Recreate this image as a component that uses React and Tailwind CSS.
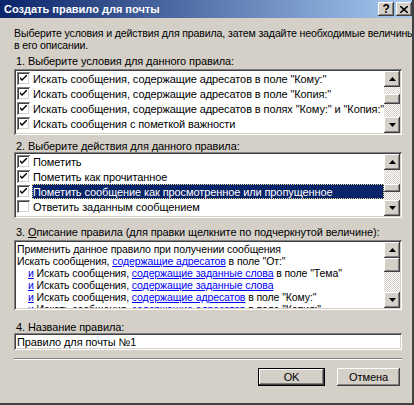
import React from 'react';

const raised = "shadow-[inset_-1px_-1px_#404040,inset_1px_1px_#ffffff,inset_-2px_-2px_#808080,inset_2px_2px_#d4d0c8]";
const sunken = "shadow-[inset_1px_1px_#808080,inset_-1px_-1px_#ffffff,inset_2px_2px_#404040,inset_-2px_-2px_#d4d0c8]";
const checker = "bg-[repeating-conic-gradient(#ffffff_0_25%,#d4d0c8_0_50%)] bg-[length:2px_2px]";

const Arrow = ({ up }) => (
  <div className={`w-[16px] h-[16px] shrink-0 bg-[#d4d0c8] ${raised} flex items-center justify-center`}>
    <svg width="7" height="4" viewBox="0 0 7 4">
      {up ? <path d="M3.5 0 L7 4 L0 4 Z" fill="#000" /> : <path d="M0 0 L7 0 L3.5 4 Z" fill="#000" />}
    </svg>
  </div>
);

const ScrollBar = ({ before, thumb }) => (
  <div className="w-[16px] h-full flex flex-col shrink-0">
    <Arrow up />
    <div className={`flex-1 flex flex-col ${checker}`}>
      <div style={{ height: before }} />
      <div className={`w-[16px] bg-[#d4d0c8] ${raised}`} style={{ height: thumb }} />
    </div>
    <Arrow />
  </div>
);

const Check = ({ on }) => (
  <div className={`w-[13px] h-[13px] bg-white shrink-0 ${sunken} flex items-center justify-center`}>
    {on && (
      <svg width="7" height="7" viewBox="0 0 7 7">
        <path d="M0 2 L0 4 L2 6 L7 1 L7 -1 L2 4 Z" fill="#000" />
      </svg>
    )}
  </div>
);

const Row = ({ on, text, selected }) => (
  <div className="h-[15px] flex items-center pl-[1px]">
    <Check on={on} />
    <div className={`ml-[2px] h-[15px] flex items-center pl-[1px] flex-1 ${selected ? 'bg-[#0a246a] text-white outline-1 outline-dotted outline-[#e8d890] -outline-offset-1' : ''}`}>
      <span className="whitespace-nowrap">{text}</span>
    </div>
  </div>
);

const L = ({ children }) => <span className="text-[#0000ff] underline">{children}</span>;

export default function App() {
  return (
    <div className="w-[414px] h-[405px] bg-[#d4d0c8] text-black text-[11px] leading-[12px] tracking-[-0.1px] font-['Liberation_Sans',Arial,sans-serif] flex flex-col border-r-2 border-b-2 border-[#404040] overflow-hidden">
      <div className="h-[18px] shrink-0 bg-[linear-gradient(to_right,#0a246a,#a6caf0)] flex items-center pl-[4px] pr-[0px]">
        <span className="text-white font-bold text-[11px] tracking-normal flex-1">Создать правило для почты</span>
        <div className={`w-[16px] h-[14px] bg-[#d4d0c8] ${raised} flex items-center justify-center font-bold text-[12px] leading-none`}>?</div>
        <div className={`w-[16px] h-[14px] ml-[2px] bg-[#d4d0c8] ${raised} flex items-center justify-center`}>
          <svg width="8" height="7" viewBox="0 0 8 7">
            <path d="M0 0 L8 7 M8 0 L0 7" stroke="#000" strokeWidth="1.6" />
          </svg>
        </div>
      </div>

      <div className="flex flex-col pl-[14px] pr-[10px]">
        <div className="mt-[9px] whitespace-nowrap text-[10.6px] tracking-[-0.15px]">
          Выберите условия и действия для правила, затем задайте необходимые величины
          <br />в его описании.
        </div>
        <div className="mt-[4px] pl-[2px]">1. Выберите условия для данного правила:</div>
        <div className={`mt-[2px] h-[66px] bg-white p-[2px] flex ${sunken}`}>
          <div className="flex-1 flex flex-col overflow-hidden">
            <Row on text='Искать сообщения, содержащие адресатов в поле "Кому:"' />
            <Row on text='Искать сообщения, содержащие адресатов в поле "Копия:"' />
            <Row on text='Искать сообщения, содержащие адресатов в полях "Кому:" и "Копия:"' />
            <Row on text="Искать сообщения с пометкой важности" />
          </div>
          <ScrollBar before={7} thumb={10} />
        </div>

        <div className="mt-[5px] pl-[2px]">2. Выберите действия для данного правила:</div>
        <div className={`h-[66px] bg-white p-[2px] flex ${sunken}`}>
          <div className="flex-1 flex flex-col overflow-hidden">
            <Row on text="Пометить" />
            <Row on text="Пометить как прочитанное" />
            <Row on selected text="Пометить сообщение как просмотренное или пропущенное" />
            <Row text="Ответить заданным сообщением" />
          </div>
          <ScrollBar before={14} thumb={8} />
        </div>

        <div className="mt-[8px] pl-[2px]">3. <span className="underline">О</span>писание правила (для правки щелкните по подчеркнутой величине):</div>
        <div className={`mt-[2px] h-[70px] bg-white p-[2px] flex ${sunken}`}>
          <div className="flex-1 overflow-hidden pl-[1px] pt-[1px] text-[10.5px] leading-[12px] whitespace-nowrap">
            <div>Применить данное правило при получении сообщения</div>
            <div>Искать сообщения, <L>содержащие адресатов</L> в поле "От:"</div>
            <div className="pl-[11px]"><L>и</L> Искать сообщения, <L>содержащие заданные слова</L> в поле "Тема"</div>
            <div className="pl-[11px]"><L>и</L> Искать сообщения, <L>содержащие заданные слова</L></div>
            <div className="pl-[11px]"><L>и</L> Искать сообщения, <L>содержащие адресатов</L> в поле "Кому:"</div>
            <div className="pl-[11px]"><L>и</L> Искать сообщения, <L>содержащие адресатов</L> в поле "Копия:"</div>
          </div>
          <ScrollBar before={0} thumb={14} />
        </div>

        <div className="mt-[11px] pl-[2px]">4. Название правила:</div>
        <div className={`h-[17px] bg-white flex items-center pl-[3px] ${sunken}`}>Правило для почты №1</div>

        <div className="mt-[8px] h-[2px] border-t border-[#808080] border-b border-b-white" />

        <div className="mt-[8px] flex justify-end gap-[12px] pr-[2px]">
          <div className="w-[67px] h-[18px] border border-black flex">
            <div className={`flex-1 bg-[#d4d0c8] ${raised} flex items-center justify-center`}>OK</div>
          </div>
          <div className={`w-[63px] h-[18px] bg-[#d4d0c8] ${raised} flex items-center justify-center`}>Отмена</div>
        </div>
      </div>
    </div>
  );
}
